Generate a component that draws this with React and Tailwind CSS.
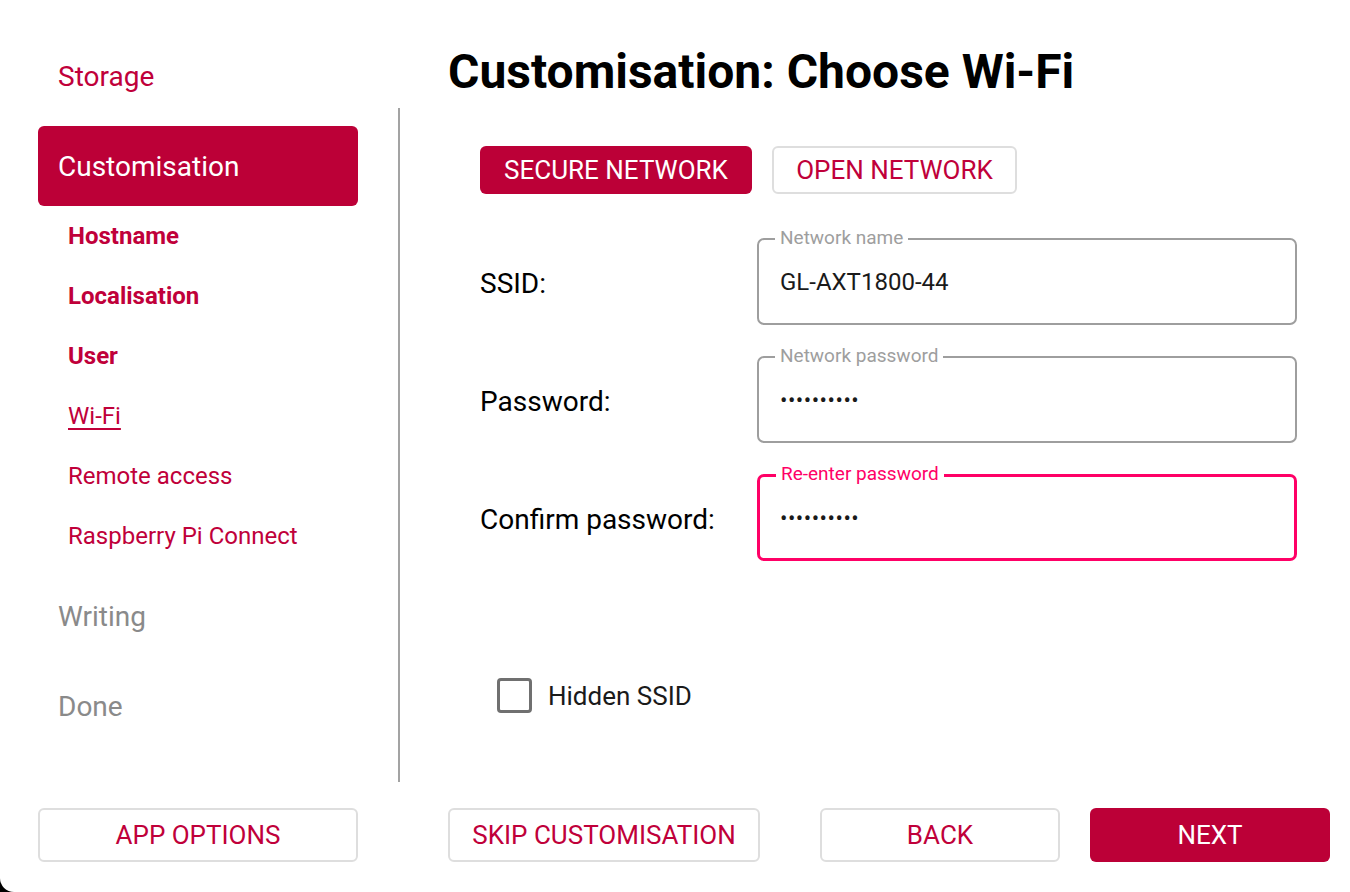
export default function App() {
  const subs = [
    { t: "Hostname", cls: "font-bold" },
    { t: "Localisation", cls: "font-bold" },
    { t: "User", cls: "font-bold" },
    { t: "Wi-Fi", cls: "underline underline-offset-[4px] decoration-[1.5px]" },
    { t: "Remote access", cls: "" },
    { t: "Raspberry Pi Connect", cls: "" },
  ];
  const rows = [
    { label: "SSID:", legend: "Network name", value: "GL-AXT1800-44", focus: false, pw: false },
    { label: "Password:", legend: "Network password", value: "••••••••••", focus: false, pw: true },
    { label: "Confirm password:", legend: "Re-enter password", value: "••••••••••", focus: true, pw: true },
  ];
  return (
    <div className="w-[1350px] h-[892px] bg-black font-['Roboto',sans-serif] overflow-hidden">
      <div className="w-full h-full bg-white rounded-bl-[14px] flex flex-col">
        <div className="flex h-[792px]">
          <aside className="w-[398px] pl-[38px] pr-[40px] pt-[36px] flex flex-col">
            <div className="h-[80px] flex items-center pl-[20px] pt-[2px] text-[28px] text-[#c0003a]">Storage</div>
            <div className="mt-[10px] h-[80px] flex items-center pl-[20px] pt-[2px] text-[28px] text-white bg-[#bc0037] rounded-[6px]">
              Customisation
            </div>
            {subs.map((s) => (
              <div key={s.t} className="h-[60px] flex items-center pl-[30px]">
                <span className={"text-[24px] text-[#c0003a] " + s.cls}>{s.t}</span>
              </div>
            ))}
            <div className="mt-[10px] h-[80px] flex items-center pl-[20px] pt-[2px] text-[28px] text-[#8a8a8a]">Writing</div>
            <div className="mt-[10px] h-[80px] flex items-center pl-[20px] pt-[2px] text-[28px] text-[#8a8a8a]">Done</div>
          </aside>
          <div className="w-[2px] bg-[#a3a3a3] mt-[108px] mb-[10px]" />
          <main className="flex-1 pl-[48px] pt-[44px] flex flex-col">
            <h1 className="text-[48px] font-bold leading-[56px] text-black">Customisation: Choose Wi-Fi</h1>
            <div className="mt-[46px] ml-[32px] flex gap-[20px]">
              <div className="h-[48px] w-[272px] rounded-[6px] bg-[#bc0037] text-white text-[26px] flex items-center justify-center">
                SECURE NETWORK
              </div>
              <div className="h-[48px] w-[245px] rounded-[6px] border-2 border-[#dedede] text-[#c0003a] text-[26px] flex items-center justify-center">
                OPEN NETWORK
              </div>
            </div>
            <div className="mt-[44px] ml-[32px] flex flex-col gap-[31px]">
              {rows.map((r) => (
                <div key={r.label} className="flex items-center">
                  <div className="w-[277px] text-[28px] text-black pt-[4px]">{r.label}</div>
                  <div
                    className={
                      "relative w-[540px] h-[87px] rounded-[7px] flex items-center " +
                      (r.focus ? "border-[3px] border-[#ff0066] pl-[20px]" : "border-2 border-[#9e9e9e] pl-[21px]")
                    }
                  >
                    <span
                      className={
                        "absolute left-[16px] bg-white px-[5px] text-[19px] leading-[22px] " +
                        (r.focus ? "top-[-14px] left-[15px] text-[#ff0066]" : "top-[-13px] text-[#9e9e9e]")
                      }
                    >
                      {r.legend}
                    </span>
                    <span
                      className={
                        r.pw
                          ? "text-[22px] text-[#1a1a1a] tracking-[0.5px] pt-[2px]"
                          : "text-[24px] text-[#1a1a1a]"
                      }
                    >
                      {r.value}
                    </span>
                  </div>
                </div>
              ))}
            </div>
            <div className="mt-[117px] ml-[49px] flex items-center gap-[16px]">
              <div className="w-[35px] h-[35px] border-[3px] border-[#707070] rounded-[4px]" />
              <span className="text-[26px] text-[#1a1a1a] leading-[30px] pt-[1px]">Hidden SSID</span>
            </div>
          </main>
        </div>
        <div className="flex pt-[16px] pl-[38px]">
          <div className="h-[54px] w-[320px] rounded-[6px] border-2 border-[#dedede] text-[#c0003a] text-[26px] flex items-center justify-center">
            APP OPTIONS
          </div>
          <div className="ml-[90px] h-[54px] w-[312px] rounded-[6px] border-2 border-[#dedede] text-[#c0003a] text-[26px] flex items-center justify-center">
            SKIP CUSTOMISATION
          </div>
          <div className="ml-[60px] h-[54px] w-[240px] rounded-[6px] border-2 border-[#dedede] text-[#c0003a] text-[26px] flex items-center justify-center">
            BACK
          </div>
          <div className="ml-[30px] h-[54px] w-[240px] rounded-[6px] bg-[#bc0037] text-white text-[26px] flex items-center justify-center">
            NEXT
          </div>
        </div>
      </div>
    </div>
  );
}
